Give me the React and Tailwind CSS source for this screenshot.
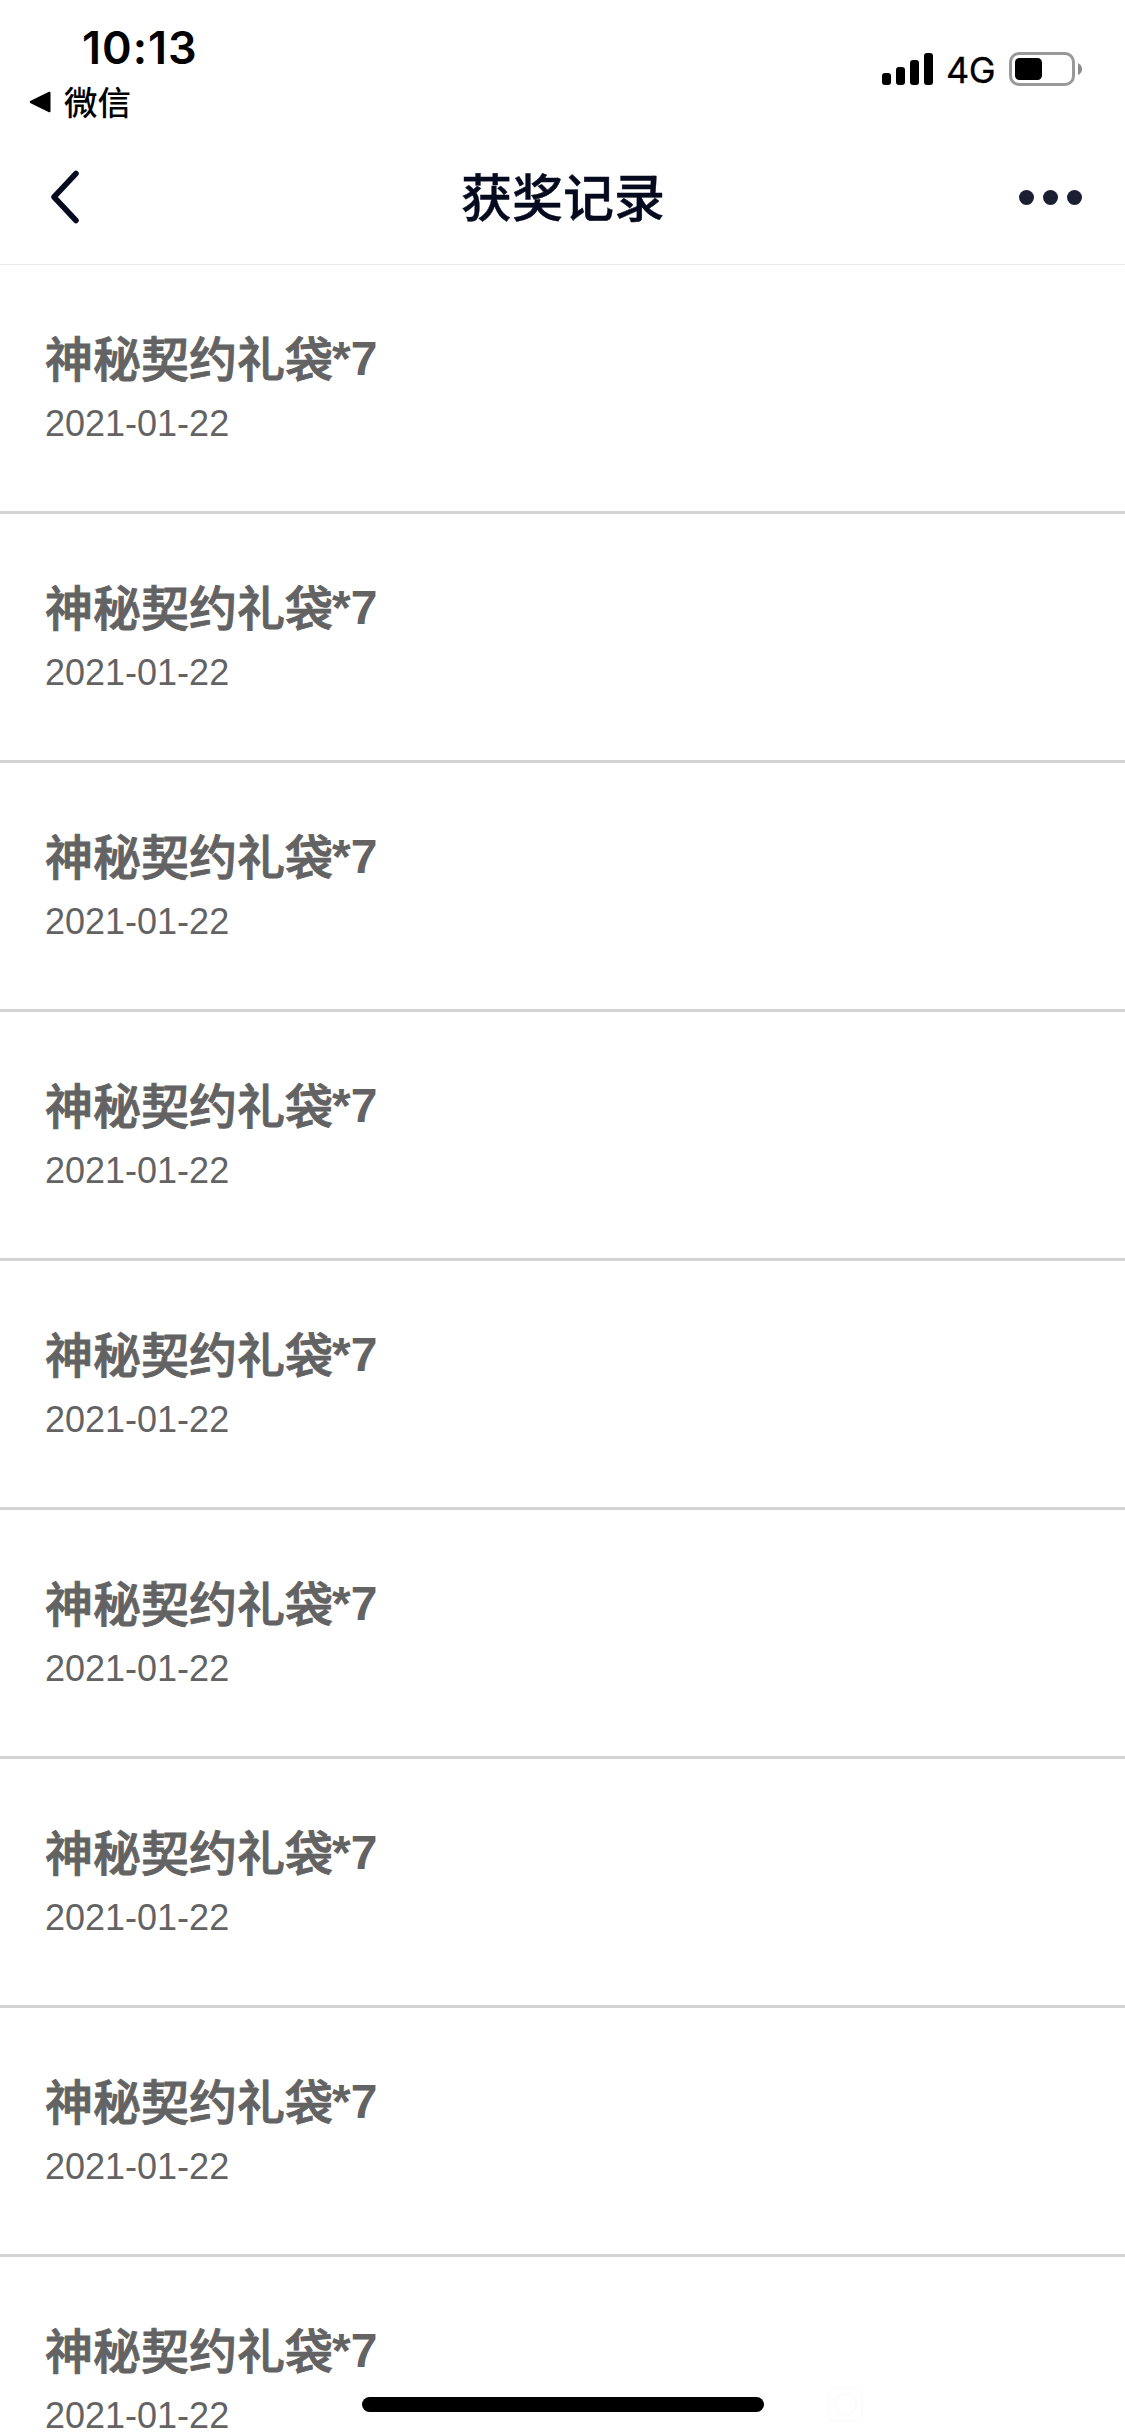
const records = Array.from({ length: 9 }, (_, id) => ({ id, name: '神秘契约礼袋', count: '*7', date: '2021-01-22' }));

function StatusBar() {
  return (
    <div className="flex h-[132px] items-start justify-between pl-[29px] pr-[43px] text-black">
      <div className="flex flex-col">
        <span className="mt-[20px] h-[56px] pl-[53px] font-['Inter'] text-[45px] leading-[56px] font-semibold tracking-[1px] whitespace-nowrap">10:13</span>
        <div className="mt-[2px] flex h-[48px] items-center">
          <svg width="22" height="22" viewBox="0 0 22 22">
            <path d="M1.2 10 20 .8Q21.5.3 21.5 2v18q0 1.700-1.500 1.200L1.200 12Q0 11 1.200 10Z" />
          </svg>
          <span className="-mt-[2px] ml-[13px] font-['Noto_Sans_CJK_SC',sans-serif] text-[33.5px] leading-[48px] font-medium">微信</span>
        </div>
      </div>
      <div className="mt-[51px] flex h-[36px] items-center">
        <svg width="52" height="34" viewBox="0 0 52 34">
          <rect x="0" y="21" width="9" height="12" rx="3" />
          <rect x="14" y="15" width="9" height="18" rx="3" />
          <rect x="28" y="8" width="9" height="25" rx="3" />
          <rect x="42" y="1" width="9" height="32" rx="3" />
        </svg>
        <span className="mt-[2px] ml-[12px] w-[63px] font-['Inter'] text-[36px] leading-[36px] tracking-[-0.5px] whitespace-nowrap [-webkit-text-stroke:0.3px_black]">4G</span>
        <svg width="73" height="36" viewBox="0 0 73 36">
          <rect x="1.500" y="2.500" width="63" height="31" rx="8.500" fill="none" stroke="#999" strokeWidth="3" />
          <rect x="6" y="7" width="27" height="22" rx="4.500" />
          <path d="M69 12q4 2 4 6t-4 6Z" fill="#8c8c8c" />
        </svg>
      </div>
    </div>
  );
}

function NavBar() {
  return (
    <header className="grid h-[133px] grid-cols-3 items-center border-b border-[#e8e8e8] pl-[50px] pr-[43px]">
      <svg className="-mt-[2px]" width="30" height="54" viewBox="0 0 30 54" fill="none" stroke="#050a1e" strokeWidth="5.500" strokeLinecap="round" strokeLinejoin="round">
        <path d="M26 3.500 4 27 26 50.500" />
      </svg>
      <h1 className="-mt-[7px] mr-[6px] text-center font-['Noto_Sans_CJK_SC',sans-serif] text-[51px] leading-[74px] font-medium whitespace-nowrap text-[#050a1e] [-webkit-text-stroke:0.4px_#050a1e]">获奖记录</h1>
      <div className="-mt-[1px] flex justify-end gap-[9px]">
        <span className="size-[15px] rounded-full bg-[#1c1f33]" />
        <span className="size-[15px] rounded-full bg-[#1c1f33]" />
        <span className="size-[15px] rounded-full bg-[#1c1f33]" />
      </div>
    </header>
  );
}

function RecordRow({ name, count, date }) {
  return (
    <li className="h-[249px] border-b-[3px] border-[#d3d3d3] pl-[45px] pt-[55px] font-['Liberation_Sans','Noto_Sans_CJK_SC',sans-serif] text-[#636363]">
      <p className="flex h-[77px] items-start text-[48px] leading-[72px]">
        <span className="font-['Noto_Sans_CJK_SC',sans-serif] font-medium [-webkit-text-stroke:0.9px_#636363]">{name}</span>
        <span className="mt-[3px] -ml-px font-bold">{count}</span>
      </p>
      <p className="h-[54px] text-[36px] leading-[54px]">{date}</p>
    </li>
  );
}

export default function App() {
  return (
    <div className="relative h-[2436px] w-[1125px] overflow-hidden bg-white">
      <StatusBar />
      <NavBar />
      <ul>
        {records.map((r) => (
          <RecordRow key={r.id} name={r.name} count={r.count} date={r.date} />
        ))}
      </ul>
      <div className="absolute bottom-[24px] left-[361px] ml-px h-[15px] w-[402px] rounded-full bg-black" />
      <div className="absolute bottom-[14px] left-[828px] flex size-[35px] items-center justify-center rounded-[6px] border-2 border-[#fcfcfc]">
        <div className="size-[23px] rounded-full border-2 border-[#fcfcfc]" />
      </div>
    </div>
  );
}
